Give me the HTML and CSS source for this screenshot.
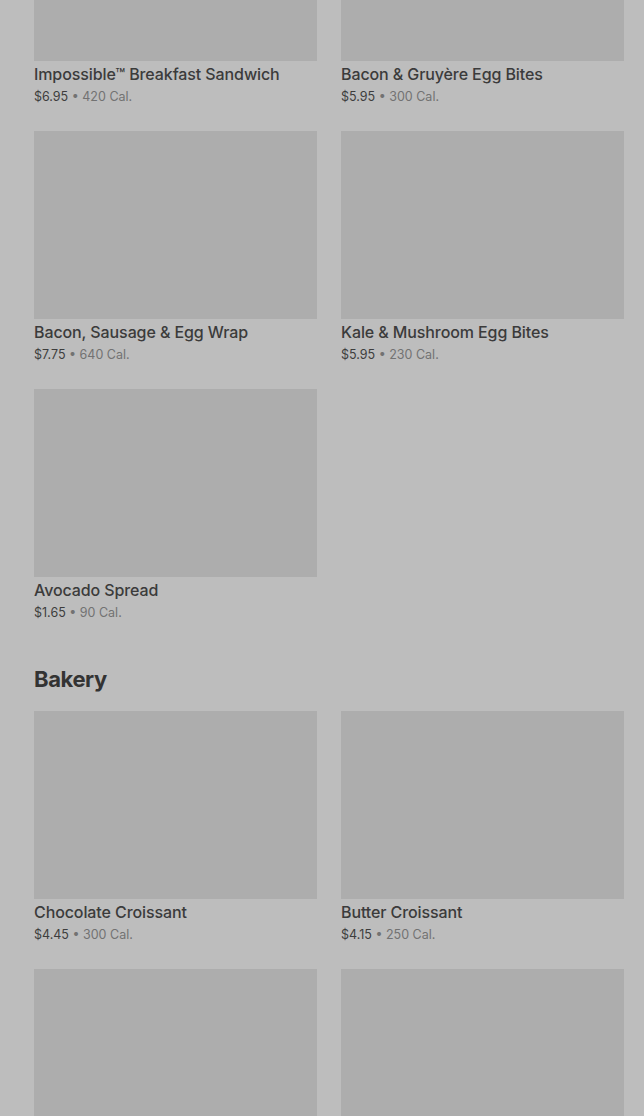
FILE: index.html
```html
<!DOCTYPE html>
<html lang="en">
<head>
    <meta charset="UTF-8">
    <meta name="viewport" content="width=device-width, initial-scale=1.0">
    <title>Menu</title>
    <link rel="stylesheet" href="styles.css">
</head>
<body>
    <div class="menu">
        <section class="category">
            <div class="grid">
                <div class="item">
                    <div class="thumb"></div>
                    <h3>Impossible™ Breakfast Sandwich</h3>
                    <p class="meta"><span class="price">$6.95</span> • 420 Cal.</p>
                </div>
                <div class="item">
                    <div class="thumb"></div>
                    <h3>Bacon &amp; Gruyère Egg Bites</h3>
                    <p class="meta"><span class="price">$5.95</span> • 300 Cal.</p>
                </div>
                <div class="item">
                    <div class="thumb"></div>
                    <h3>Bacon, Sausage &amp; Egg Wrap</h3>
                    <p class="meta"><span class="price">$7.75</span> • 640 Cal.</p>
                </div>
                <div class="item">
                    <div class="thumb"></div>
                    <h3>Kale &amp; Mushroom Egg Bites</h3>
                    <p class="meta"><span class="price">$5.95</span> • 230 Cal.</p>
                </div>
                <div class="item">
                    <div class="thumb"></div>
                    <h3>Avocado Spread</h3>
                    <p class="meta"><span class="price">$1.65</span> • 90 Cal.</p>
                </div>
            </div>
        </section>

        <section class="category">
            <h2>Bakery</h2>
            <div class="grid">
                <div class="item">
                    <div class="thumb"></div>
                    <h3>Chocolate Croissant</h3>
                    <p class="meta"><span class="price">$4.45</span> • 300 Cal.</p>
                </div>
                <div class="item">
                    <div class="thumb"></div>
                    <h3>Butter Croissant</h3>
                    <p class="meta"><span class="price">$4.15</span> • 250 Cal.</p>
                </div>
                <div class="item">
                    <div class="thumb"></div>
                </div>
                <div class="item">
                    <div class="thumb"></div>
                </div>
            </div>
        </section>
    </div>
</body>
</html>
```

FILE: styles.css
```css
body {
    margin: 0;
    padding: 0;
    background: #bdbdbd;
    font-family: 'Inter', 'Liberation Sans', sans-serif;
    color: #3a3a3a;
    height: 1116px;
    overflow: hidden;
}
.menu {
    /* page is scrolled part way into the list */
    margin-top: -127px;
    padding: 0 20px 0 34px;
}
.category h2 {
    margin: 42px 0 18px;
    font-size: 22px;
    line-height: 28px;
    font-weight: 700;
    letter-spacing: -0.4px;
    color: #333333;
}
.grid {
    display: grid;
    grid-template-columns: 283px 283px;
    column-gap: 24px;
    row-gap: 24px;
}
.thumb {
    height: 188px;
    background: #adadad;
}
.item h3 {
    margin: 2px 0 0;
    font-size: 16px;
    line-height: 22px;
    font-weight: 500;
    letter-spacing: -0.1px;
    color: #3b3b3b;
}
.meta {
    margin: 2px 0 0;
    font-size: 12.5px;
    line-height: 20px;
    color: #727272;
}
.meta .price {
    color: #3d3d3d;
}
```
